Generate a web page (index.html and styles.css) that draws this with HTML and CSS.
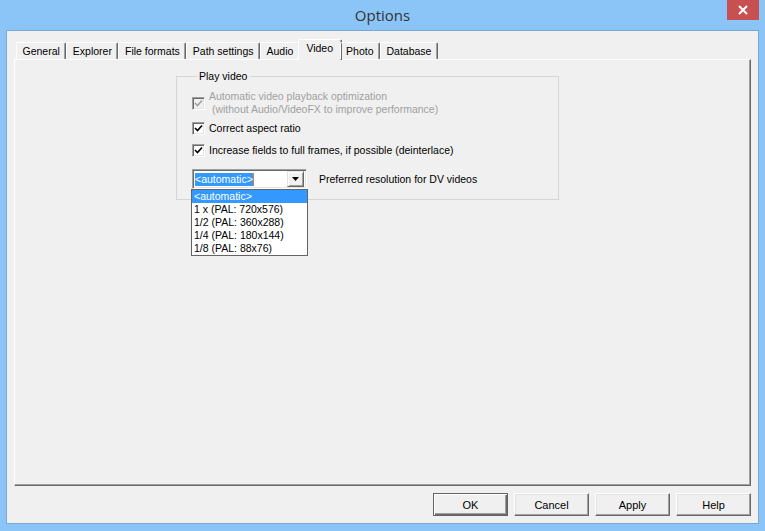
FILE: index.html
```html
<!DOCTYPE html>
<html lang="en">
  <head>
    <meta charset="UTF-8" />
    <title>Options</title>
    <link rel="stylesheet" href="styles.css">
  </head>
  <body>
    <div class="window">
      <div class="titlebar">
        <span></span>
        <span class="title">Options</span>
        <span class="close">
          <svg width="10" height="10" viewBox="0 0 10 10">
            <path d="M1 1 L9 9 M9 1 L1 9" stroke="#fff" stroke-width="2" />
          </svg>
        </span>
      </div>

      <div class="client">
        <div class="tabs">
          <span class="tab">General</span>
          <span class="tab">Explorer</span>
          <span class="tab">File formats</span>
          <span class="tab">Path settings</span>
          <span class="tab">Audio</span>
          <span class="tab active">Video</span>
          <span class="tab">Photo</span>
          <span class="tab">Database</span>
        </div>

        <div class="panel">
          <fieldset class="group">
            <legend>Play video</legend>

            <div class="option disabled">
              <span class="check">
                <svg width="9" height="9" viewBox="0 0 9 9"><path d="M1 4 L3.5 6.5 L8 1.5" /></svg>
              </span>
              <span class="label">
                Automatic video playback optimization<br />
                &nbsp;(without Audio/VideoFX to improve performance)
              </span>
            </div>

            <div class="option second">
              <span class="check">
                <svg width="9" height="9" viewBox="0 0 9 9"><path d="M1 4 L3.5 6.5 L8 1.5" /></svg>
              </span>
              <span class="label">Correct aspect ratio</span>
            </div>

            <div class="option third">
              <span class="check">
                <svg width="9" height="9" viewBox="0 0 9 9"><path d="M1 4 L3.5 6.5 L8 1.5" /></svg>
              </span>
              <span class="label">Increase fields to full frames, if possible (deinterlace)</span>
            </div>

            <div class="combo-row">
              <div class="combo">
                <span class="combo-text"><span class="selected">&lt;automatic&gt;</span><span class="caret"></span></span>
                <span class="combo-btn">
                  <svg width="7" height="4" viewBox="0 0 7 4"><path d="M0 0 H7 L3.5 4 Z" fill="#000" /></svg>
                </span>
                <ul class="dropdown">
                  <li class="hl">&lt;automatic&gt;</li>
                  <li>1 x (PAL: 720x576)</li>
                  <li>1/2 (PAL: 360x288)</li>
                  <li>1/4 (PAL: 180x144)</li>
                  <li>1/8 (PAL: 88x76)</li>
                </ul>
              </div>
              <span class="combo-label">Preferred resolution for DV videos</span>
            </div>
          </fieldset>
        </div>

        <div class="buttons">
          <button class="btn default">OK</button>
          <button class="btn">Cancel</button>
          <button class="btn">Apply</button>
          <button class="btn">Help</button>
        </div>
      </div>
    </div>
  </body>
</html>
```

FILE: styles.css
```css
:root {
  --frame: #8bc5f7;
  --face: #f0f0f0;
  --shadow: #a0a0a0;
  --dark: #696969;
  --highlight: #3399ff;
}

body {
  margin: 0;
  font-family: "Liberation Sans", Arial, sans-serif;
  font-size: 10.5px;
  color: #000;
}

.window {
  width: 765px;
  height: 531px;
  background-color: var(--frame);
  box-sizing: border-box;
  padding: 0 7px 8px 7px;
  display: flex;
  flex-direction: column;
}

.titlebar {
  height: 31px;
  display: grid;
  grid-template-columns: 1fr auto 1fr;
}

.title {
  font-family: "Open Sans", "Noto Sans", sans-serif;
  font-size: 15px;
  color: #333;
  line-height: 30px;
}

.close {
  justify-self: end;
  width: 32px;
  height: 20px;
  margin-right: -1px;
  background-color: #c75050;
  display: flex;
  align-items: center;
  justify-content: center;
}

.client {
  flex: 1;
  background-color: var(--face);
  box-shadow: 0 0 0 1px #76a9d6;
  padding: 8px 7px 0 7px;
}

/* tabs */
.tabs {
  height: 20px;
  display: flex;
  align-items: flex-end;
  padding-left: 2px;
  position: relative;
  z-index: 1;
}

.tab {
  height: 17px;
  box-sizing: border-box;
  padding: 0 5.5px;
  line-height: 16px;
  border-top: 1px solid #fff;
  border-left: 1px solid #fff;
  border-right: 1px solid var(--dark);
  box-shadow: inset -1px 0 var(--shadow);
  border-radius: 2px 2px 0 0;
  white-space: nowrap;
}

.tab.active {
  height: 21px;
  margin: 0 -2px -1px -2px;
  padding: 0 7.5px;
  line-height: 17px;
  background-color: var(--face);
}

.panel {
  height: 427px;
  box-sizing: border-box;
  border-top: 1px solid #fff;
  border-left: 1px solid #fff;
  border-right: 1px solid var(--dark);
  border-bottom: 1px solid var(--dark);
  box-shadow: inset -1px -1px var(--shadow);
  padding-top: 10px;
}

/* group box */
.group {
  margin: 0 0 0 161px;
  width: 383px;
  box-sizing: border-box;
  border: 1px solid #d5d5d5;
  padding: 7px 0 10px 15px;
}

.group legend {
  margin-left: 5px;
  padding: 0 3px 0 2px;
  line-height: 13px;
}

.option {
  display: flex;
  align-items: center;
  line-height: 13px;
}

.option.second {
  margin-top: 6px;
}

.option.third {
  margin-top: 9px;
}

.check {
  width: 13px;
  height: 13px;
  box-sizing: border-box;
  border-top: 1px solid var(--shadow);
  border-left: 1px solid var(--shadow);
  border-right: 1px solid #fff;
  border-bottom: 1px solid #fff;
  box-shadow: inset 1px 1px var(--dark), inset -1px -1px #e3e3e3;
  background-color: #fff;
  margin-right: 4px;
  display: flex;
  align-items: center;
  justify-content: center;
  flex-shrink: 0;
}

.check path {
  fill: none;
  stroke: #000;
  stroke-width: 1.6;
}

.option.disabled {
  color: var(--shadow);
}

.option.disabled .check {
  background-color: var(--face);
}

.option.disabled .check path {
  stroke: var(--shadow);
}

/* combo box */
.combo-row {
  display: flex;
  align-items: center;
  margin-top: 12px;
}

.combo {
  position: relative;
  width: 115px;
  height: 20px;
  box-sizing: border-box;
  border-top: 1px solid var(--shadow);
  border-left: 1px solid var(--shadow);
  border-right: 1px solid #fff;
  border-bottom: 1px solid #fff;
  box-shadow: inset 1px 1px var(--dark), inset -1px -1px #e3e3e3;
  background-color: #fff;
  display: flex;
  align-items: center;
  padding: 0 2px 0 2px;
}

.combo-text {
  flex: 1;
  display: flex;
  align-items: center;
}

.combo-text .selected {
  background-color: var(--highlight);
  color: #fff;
  line-height: 13px;
}

.caret {
  width: 1px;
  height: 13px;
  background-color: #e8781c;
}

.combo-btn {
  width: 17px;
  height: 16px;
  box-sizing: border-box;
  background-color: var(--face);
  border-top: 1px solid #e3e3e3;
  border-left: 1px solid #e3e3e3;
  border-right: 1px solid var(--dark);
  border-bottom: 1px solid var(--dark);
  box-shadow: inset 1px 1px #fff, inset -1px -1px var(--shadow);
  display: flex;
  align-items: center;
  justify-content: center;
}

.combo-label {
  margin-left: 12px;
}

.dropdown {
  position: absolute;
  top: calc(100% + 1px);
  left: -2px;
  width: 117px;
  box-sizing: border-box;
  margin: 0;
  padding: 0;
  list-style: none;
  background-color: #fff;
  border: 1px solid #646464;
  z-index: 2;
}

.dropdown li {
  height: 13px;
  line-height: 13px;
  padding-left: 2px;
}

.dropdown li.hl {
  background-color: var(--highlight);
  color: #fff;
}

/* bottom buttons */
.buttons {
  display: flex;
  justify-content: flex-end;
  gap: 6px;
  margin-top: 7px;
}

.btn {
  width: 75px;
  height: 23px;
  font-family: "Liberation Sans", Arial, sans-serif;
  font-size: 11px;
  color: #000;
  background-color: var(--face);
  border-top: 1px solid #fff;
  border-left: 1px solid #fff;
  border-right: 1px solid var(--dark);
  border-bottom: 1px solid var(--dark);
  box-shadow: inset -1px -1px var(--shadow), inset 1px 1px #e3e3e3;
  padding: 0;
}

.btn.default {
  border: 1px solid #646464;
  box-shadow: inset 1px 1px #fff, inset -1px -1px var(--dark), inset -2px -2px var(--shadow);
}
```
